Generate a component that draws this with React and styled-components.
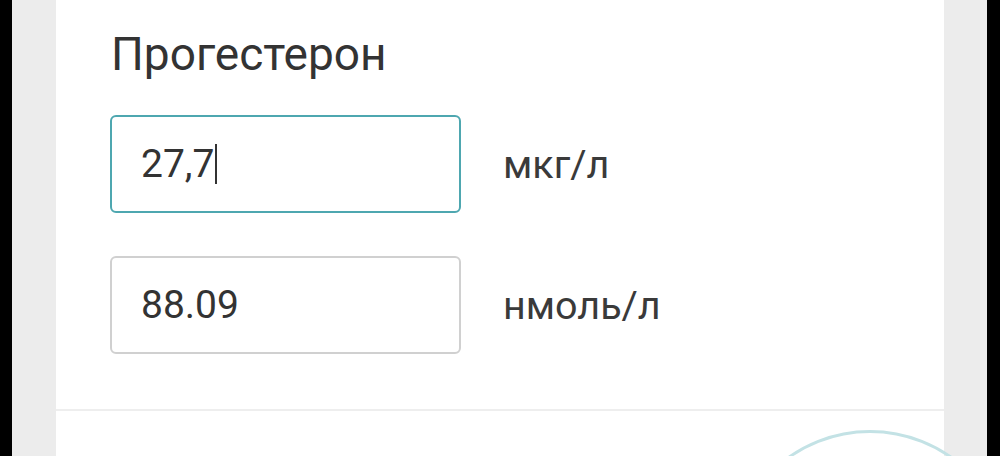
import React from 'react';
import styled, {createGlobalStyle} from 'styled-components';

const GlobalStyle = createGlobalStyle`
html, body {
  margin: 0;
  padding: 0;
  background: #000;
}
* {
  box-sizing: border-box;
}
`;

const Screen = styled.div`
display: flex;
width: 1000px;
height: 456px;
overflow: hidden;
background: #000;
font-family: Roboto, "Noto Sans", sans-serif;
`;

const Bezel = styled.div`
width: ${props => props.width}px;
flex-shrink: 0;
background: #000;
`;

const SidePanel = styled.div`
width: ${props => props.width}px;
flex-shrink: 0;
background: #ececec;
`;

const Card = styled.div`
position: relative;
width: 888px;
flex-shrink: 0;
display: flex;
flex-direction: column;
background: #fff;
`;

const FormSection = styled.div`
height: 409px;
display: flex;
flex-direction: column;
padding: 28px 0 0 54px;
`;

const Title = styled.div`
font-size: 46px;
line-height: 52px;
color: #333;
margin-bottom: 35px;
padding-left: 1px;
`;

const Rows = styled.div`
display: flex;
flex-direction: column;
gap: 43px;
`;

const Row = styled.div`
display: flex;
align-items: center;
gap: 42px;
`;

const Field = styled.div`
width: 351px;
height: 98px;
display: flex;
align-items: center;
padding-left: 29px;
border: 2px solid ${props => props.focused ? '#4ea7b0' : '#d0d0d0'};
border-radius: 6px;
font-size: 39px;
color: #333;
`;

const Caret = styled.span`
display: inline-block;
width: 2px;
height: 40px;
margin-left: 1px;
background: #333;
`;

const Unit = styled.div`
font-size: 39.5px;
color: #3a3a3a;
`;

const Divider = styled.div`
height: 2px;
background: #eeeeee;
`;

const Bottom = styled.div`
flex: 1;
`;

// light ring of the button that lies under the fold
const Ripple = styled.div`
position: absolute;
left: 672px;
top: 430px;
width: 284px;
height: 284px;
border-radius: 50%;
border: 3px solid #c3e2e5;
`;

const fields = [
    {value: '27,7', unit: 'мкг/л', focused: true},
    {value: '88.09', unit: 'нмоль/л', focused: false},
];

const App = () => {
    return (
        <>
            <GlobalStyle/>
            <Screen>
                <Bezel width={12}/>
                <SidePanel width={44}/>
                <Card>
                    <FormSection>
                        <Title>Прогестерон</Title>
                        <Rows>
                            {fields.map(field => (
                                <Row key={field.unit}>
                                    <Field focused={field.focused}>
                                        {field.value}
                                        {field.focused && <Caret/>}
                                    </Field>
                                    <Unit>{field.unit}</Unit>
                                </Row>
                            ))}
                        </Rows>
                    </FormSection>
                    <Divider/>
                    <Bottom/>
                    <Ripple/>
                </Card>
                <SidePanel width={43}/>
                <Bezel width={13}/>
            </Screen>
        </>
    )
};
export default App;
